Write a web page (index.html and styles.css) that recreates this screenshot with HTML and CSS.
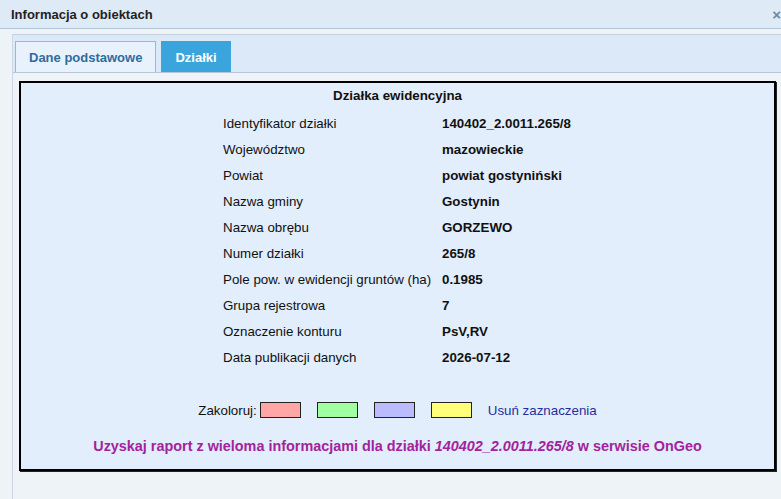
FILE: index.html
```html
<!DOCTYPE html>
<html>
<head>
    <meta charset="utf-8">
    <title>Informacja o obiektach</title>
    <link rel="stylesheet" href="styles.css">
</head>
<body>
    <div class="window-header">
        <span class="window-title">Informacja o obiektach</span>
        <span class="window-close">&times;</span>
    </div>
    <div class="window-body">
        <div class="tab-bar">
            <div class="tab">Dane podstawowe</div>
            <div class="tab tab-active">Działki</div>
        </div>
        <div class="tab-panel">
            <div class="parcel-box">
                <div class="parcel-title">Działka ewidencyjna</div>
                <table class="parcel-table">
                    <tr><td>Identyfikator działki</td><td class="value">140402_2.0011.265/8</td></tr>
                    <tr><td>Województwo</td><td class="value">mazowieckie</td></tr>
                    <tr><td>Powiat</td><td class="value">powiat gostyniński</td></tr>
                    <tr><td>Nazwa gminy</td><td class="value">Gostynin</td></tr>
                    <tr><td>Nazwa obrębu</td><td class="value">GORZEWO</td></tr>
                    <tr><td>Numer działki</td><td class="value">265/8</td></tr>
                    <tr><td>Pole pow. w ewidencji gruntów (ha)</td><td class="value">0.1985</td></tr>
                    <tr><td>Grupa rejestrowa</td><td class="value">7</td></tr>
                    <tr><td>Oznaczenie konturu</td><td class="value">PsV,RV</td></tr>
                    <tr><td>Data publikacji danych</td><td class="value">2026-07-12</td></tr>
                </table>
                <div class="color-row">
                    <span class="color-label">Zakoloruj:</span>
                    <span class="swatch swatch-red"></span>
                    <span class="swatch swatch-green"></span>
                    <span class="swatch swatch-blue"></span>
                    <span class="swatch swatch-yellow"></span>
                    <a class="clear-link" href="#">Usuń zaznaczenia</a>
                </div>
                <div class="report-link">Uzyskaj raport z wieloma informacjami dla działki <i>140402_2.0011.265/8</i> w serwisie OnGeo</div>
            </div>
        </div>
    </div>
</body>
</html>
```

FILE: styles.css
```css
/* Reset */
* {
    margin: 0;
    padding: 0;
    box-sizing: border-box;
}

html, body {
    width: 100%;
    height: 100%;
    overflow: hidden;
    background-color: #eef3f8;
    font-family: "Liberation Sans", Arial, sans-serif;
    color: #111;
}

/* Window header */
.window-header {
    height: 29px;
    display: flex;
    justify-content: space-between;
    align-items: center;
    padding-left: 11px;
    background-color: #dfeaf7;
    border-bottom: 1px solid #b3c4d6;
}

.window-title {
    font-size: 13px;
    font-weight: bold;
    color: #222;
}

.window-close {
    font-size: 15px;
    font-weight: bold;
    color: #6b88a8;
}

.window-body {
    margin: 5px 0 0 12px;
    height: calc(100% - 34px);
    border-left: 1px solid #cbd7e3;
    border-top: 1px solid #c3d1df;
}

/* Tabs */
.tab-bar {
    height: 38px;
    display: flex;
    align-items: flex-end;
    gap: 5px;
    padding-left: 2px;
    background-color: #dce9f8;
    border-bottom: 1px solid #b6c6d6;
}

.tab {
    height: 31px;
    padding: 0 13px;
    display: flex;
    align-items: center;
    font-size: 13px;
    font-weight: bold;
    color: #2f6c9c;
    background-color: #e8f2fc;
    border: 1px solid #93b9d6;
    border-bottom: none;
}

.tab-active {
    color: #ffffff;
    background-color: #3aa5dd;
    border-color: #3aa5dd;
}

.tab-panel {
    padding: 8px 5px 0 6px;
}

/* Parcel data box */
.parcel-box {
    height: 390px;
    background-color: #e2eefb;
    border: 2px solid #000;
    box-shadow: 1px 1px 0 #222;
}

.parcel-title {
    text-align: center;
    font-size: 13.33px;
    font-weight: bold;
    padding-top: 5px;
    line-height: 16px;
    margin-bottom: 6px;
}

.parcel-table {
    border-collapse: collapse;
    margin: 0 auto;
    position: relative;
    left: 10px;
    font-size: 13.33px;
}

.parcel-table td {
    height: 26px;
    padding: 0;
    white-space: nowrap;
}

.parcel-table td:first-child {
    width: 219px;
}

.parcel-table .value {
    width: 150px;
    font-weight: bold;
}

.color-row {
    display: flex;
    justify-content: center;
    align-items: center;
    gap: 16px;
    margin-top: 32px;
    font-size: 13.33px;
}

.color-label {
    margin-right: -13px;
}

.swatch {
    width: 41px;
    height: 16px;
    border: 1px solid #222;
}

.swatch-red { background-color: #ffa6a6; }
.swatch-green { background-color: #a0ffa0; }
.swatch-blue { background-color: #bbbbff; }
.swatch-yellow { background-color: #ffff7a; }

.clear-link {
    color: #1f2f9f;
    text-decoration: none;
}

.report-link {
    margin-top: 20px;
    text-align: center;
    font-size: 14.4px;
    font-weight: bold;
    color: #a3239b;
}
```
